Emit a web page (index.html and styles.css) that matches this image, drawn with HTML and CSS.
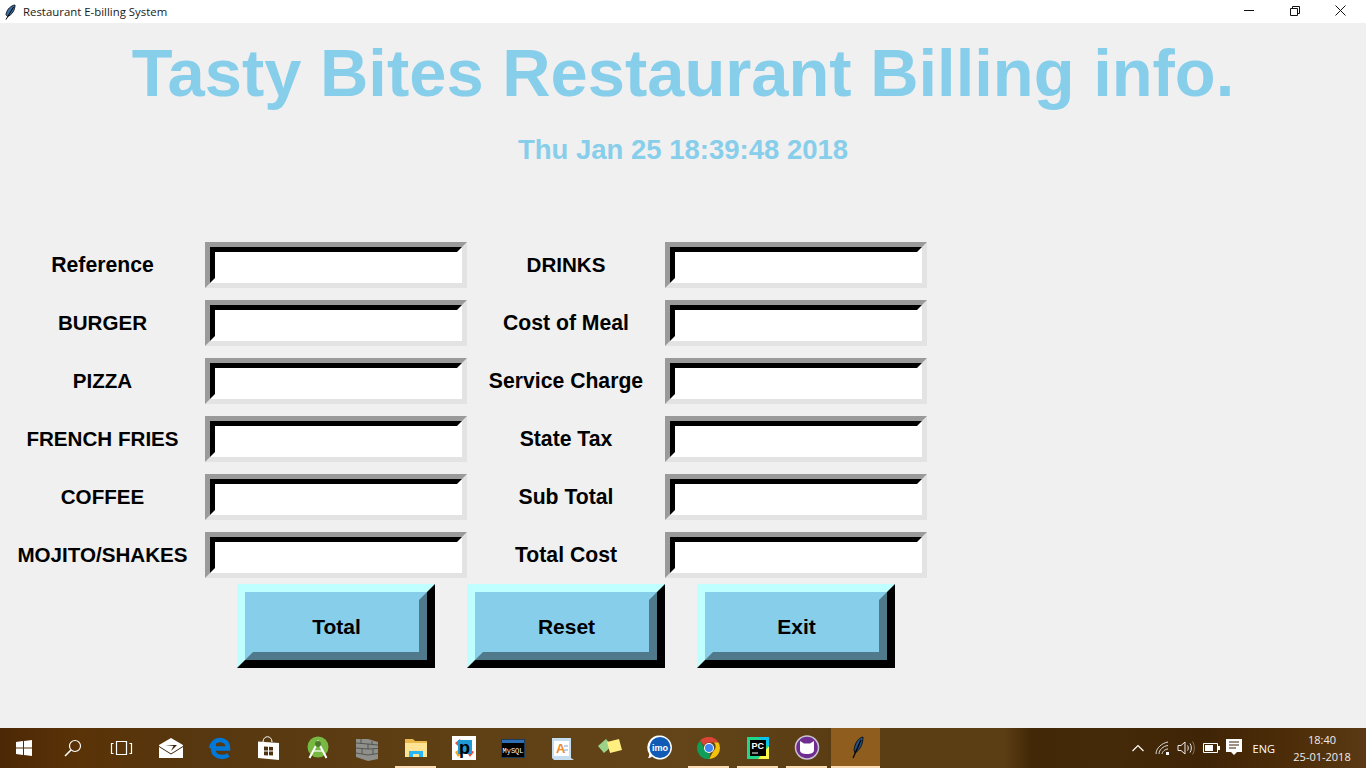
FILE: index.html
```html
<!DOCTYPE html>
<html lang="en">

<head>
    <meta charset="UTF-8">
    <title>Restaurant E-billing System</title>
    <link rel="stylesheet" href="styles.css">
</head>

<body>

    <header class="titlebar">
        <svg class="tk-icon" width="16" height="16" viewBox="0 0 16 16">
            <path d="M13 1C9 1.500 5 5 4 10.500l1.500 2C10 11 13 6 13 1z" fill="#3b6ea5" stroke="#101820" stroke-width="1" />
            <path d="M11.500 3L4 15.500" stroke="#000" stroke-width="1" />
        </svg>
        <span class="window-name">Restaurant E-billing System</span>
        <div class="window-controls">
            <svg width="46" height="23" viewBox="0 0 46 23"><path d="M18 10.500H28" stroke="#111" /></svg>
            <svg width="46" height="23" viewBox="0 0 46 23" fill="none" stroke="#111"><path d="M18.500 8.500h7v7h-7z" /><path d="M20.500 8V6.500h7v7H26" /></svg>
            <svg width="46" height="23" viewBox="0 0 46 23" stroke="#111"><path d="M17.500 5.500l10 10M27.500 5.500l-10 10" /></svg>
        </div>
    </header>

    <main class="app">
        <h1 class="heading">Tasty Bites Restaurant Billing info.</h1>
        <p class="clock-line">Thu Jan 25 18:39:48 2018</p>

        <form class="bill-form">
            <label class="mixed">Reference</label>
            <div class="field"><div class="field-inner"></div></div>
            <label>DRINKS</label>
            <div class="field"><div class="field-inner"></div></div>

            <label>BURGER</label>
            <div class="field"><div class="field-inner"></div></div>
            <label class="mixed">Cost of Meal</label>
            <div class="field"><div class="field-inner"></div></div>

            <label>PIZZA</label>
            <div class="field"><div class="field-inner"></div></div>
            <label class="mixed">Service Charge</label>
            <div class="field"><div class="field-inner"></div></div>

            <label>FRENCH FRIES</label>
            <div class="field"><div class="field-inner"></div></div>
            <label class="mixed">State Tax</label>
            <div class="field"><div class="field-inner"></div></div>

            <label>COFFEE</label>
            <div class="field"><div class="field-inner"></div></div>
            <label class="mixed">Sub Total</label>
            <div class="field"><div class="field-inner"></div></div>

            <label>MOJITO/SHAKES</label>
            <div class="field"><div class="field-inner"></div></div>
            <label class="mixed">Total Cost</label>
            <div class="field"><div class="field-inner"></div></div>
        </form>

        <div class="actions">
            <div class="btn"><div class="btn-face">Total</div></div>
            <div class="btn"><div class="btn-face">Reset</div></div>
            <div class="btn"><div class="btn-face">Exit</div></div>
        </div>
    </main>

    <footer class="taskbar">
        <div class="task-icons">
            <!-- start -->
            <div class="task"><svg viewBox="0 0 32 32"><path fill="#fff" d="M8 10l7-1v6.500H8zM16 8.900L24 8v7.500h-8zM8 16.500h7V23l-7-1zM16 16.500h8V24l-8-1.100z" /></svg></div>
            <!-- search -->
            <div class="task"><svg viewBox="0 0 32 32" fill="none" stroke="#fff" stroke-width="1.200"><circle cx="18" cy="14" r="5.500" /><path d="M14 18l-6 6" stroke-width="1.600" /></svg></div>
            <!-- task view -->
            <div class="task"><svg viewBox="0 0 32 32" fill="none" stroke="#fff" stroke-width="1.200"><path d="M10.500 9.500h10v13h-10zM7.500 11.500H5.500v10h2M23.500 11.500h2v10h-2" /></svg></div>
            <!-- mail -->
            <div class="task"><svg viewBox="0 0 32 32"><path fill="#fff" d="M4 13L16 6l12 7v13H4z" /><path fill="#3d2208" d="M10 13h12l-6 6 2.500-5z" /><path fill="#3d2208" d="M4 14l12 7.500L28 14v.9l-12 7.500-12-7.500z" /></svg></div>
            <!-- edge -->
            <div class="task"><svg viewBox="0 0 32 32" fill="none" stroke="#0078d7" stroke-width="4.500"><path d="M9 16.500h15C24 11 20.500 8 16 8c-5 0-8.500 4-9 8 1-2 3-4 5-4" /><path d="M9 16c0 6 4 9 8.500 9 2.500 0 5-.6 7-2" /></svg></div>
            <!-- store -->
            <div class="task"><svg viewBox="0 0 32 32"><path fill="none" stroke="#fff" d="M10 10c0-7 9-7 9 0" /><path fill="#fff" d="M5 9.500L26 11v17L5 26z" /><path fill="#4f3110" d="M11 14.500l4 .2v3.800h-4zM16 14.800l4 .2v3.500h-4zM11 19.500h4v4l-4-.2zM16 19.500h4v4l-4-.2z" /></svg></div>
            <!-- android studio -->
            <div class="task"><svg viewBox="0 0 32 32"><circle cx="16" cy="15" r="10.500" fill="#78b943" /><path fill="none" stroke="#fff" stroke-width="2" d="M7.500 26L16 10l8.500 16" /><path fill="none" stroke="#fff" stroke-width="1.200" d="M11 19h10" /><circle cx="16" cy="12" r="3" fill="#4e7a2c" /></svg></div>
            <!-- wall -->
            <div class="task"><svg viewBox="0 0 32 32"><path fill="#8f8f8c" d="M5 7h12l10 3v17l-10 2-12-4z" /><path fill="none" stroke="#55564f" d="M5 11l12 1 10 1M5 16l12 1 10-.5M5 21l12 2 10-1.500M10 7v5M17 12v5M11 16v6M21 9v4M22 17v5" /></svg></div>
            <!-- explorer -->
            <div class="task" data-open="yes"><svg viewBox="0 0 32 32"><path fill="#e8b84a" d="M5 7h8l2 2h12v4H5z" /><path fill="#ffe394" d="M5 11h22v14H5z" /><path fill="#29b6f6" d="M9 25v-6h14v6h-4v-3h-6v3z" /></svg></div>
            <!-- picsart -->
            <div class="task"><svg viewBox="0 0 32 32"><path fill="#fff" d="M4 4h24v24H4z" /><path fill="#e8513a" d="M7 11l5-4 2 4-4 3zM22 25l4-5-3-2-3 4z" /><path fill="#f5a623" d="M7 20l3 5 3-3-3-4z" /><path fill="#1f9ad6" d="M10 8h14v14H10z" /><text x="16.500" y="22" class="icon-letter">p</text></svg></div>
            <!-- mysql console -->
            <div class="task"><svg viewBox="0 0 32 32"><path fill="#1b3a5c" d="M4 7h24v19H4z" /><path fill="#2f6fb5" d="M5 8h22v3H5z" /><path fill="#000" d="M5 11h22v14H5z" /><text x="5.500" y="20.500" class="icon-tiny">MySQL</text></svg></div>
            <!-- office doc -->
            <div class="task"><svg viewBox="0 0 32 32"><path fill="#c6dcef" d="M6 6h19v20l3 2H8l-2-2z" /><path fill="#fff" d="M8 9h15v15H8z" /><text x="10" y="21" class="icon-doc">A</text><path stroke="#7da7cf" d="M18 14h4M18 18h4" /></svg></div>
            <!-- sticky notes -->
            <div class="task"><svg viewBox="0 0 32 32"><path fill="#9bd28a" d="M3 14l8-7 6 7-8 7z" /><path fill="#ffee80" d="M12 10l12-3 3 11-12 3z" /></svg></div>
            <!-- imo -->
            <div class="task"><svg viewBox="0 0 32 32"><path fill="#fff" d="M16 3.500a12 12 0 1 1-8 21c-1 1-3 1.500-4 1.500 1-1.500 1.500-3 1-4.500A12 12 0 0 1 16 3.500z" /><circle cx="16" cy="15.500" r="10.500" fill="#0f5bb5" /><text x="16" y="18.500" class="icon-imo">imo</text></svg></div>
            <!-- chrome -->
            <div class="task" data-open="yes"><svg viewBox="0 0 32 32"><path fill="#db4437" d="M16 5a11 11 0 0 1 9.500 5.500H16a5.500 5.500 0 0 0-5 3.300L7 8.700A11 11 0 0 1 16 5z" /><path fill="#f4c20d" d="M25.500 10.500A11 11 0 0 1 16 27l4.500-8a5.500 5.500 0 0 0 .3-8.500z" /><path fill="#0f9d58" d="M7 8.700l4.500 7.800a5.500 5.500 0 0 0 6 4.800L16 27A11 11 0 0 1 7 8.700z" /><circle cx="16" cy="16" r="5" fill="#fff" /><circle cx="16" cy="16" r="4" fill="#4285f4" /></svg></div>
            <!-- pycharm -->
            <div class="task" data-open="yes"><svg viewBox="0 0 32 32"><path fill="#21d789" d="M5 5h22v22H5z" /><path fill="#fcf84a" d="M16 27h11V14z" /><path fill="#07c3f2" d="M16 5h11v10z" /><path fill="#000" d="M8 8h16v16H8z" /><text x="9.500" y="17" class="icon-pc">PC</text><path stroke="#fff" d="M10 21h6" /></svg></div>
            <!-- github-ish cat -->
            <div class="task" data-open="yes"><svg viewBox="0 0 32 32"><circle cx="16" cy="15.500" r="11.500" fill="#6f2c91" stroke="#c9c4cf" stroke-width="1.500" /><path fill="#fff" d="M9 9l4 2.500h6L23 9v9c0 3-3 4-7 4s-7-1-7-4z" /></svg></div>
            <!-- tk feather -->
            <div class="task task-active" data-open="yes"><svg viewBox="0 0 32 32"><path d="M23 5c-5 1-8 6-9 13l1 3c5-3 8-9 8-16z" fill="#27507f" stroke="#0b1420" /><path d="M21 8L13 26" stroke="#000" stroke-width="1.200" /></svg></div>
        </div>

        <div class="tray">
            <svg class="tray-chevron" width="14" height="10" viewBox="0 0 14 10" fill="none" stroke="#fff" stroke-width="1.200"><path d="M1.500 8L7 2.500 12.500 8" /></svg>
            <svg class="tray-wifi" width="16" height="16" viewBox="0 0 16 16" fill="none" stroke="#ddd" stroke-width="1"><path d="M1 14C1 8 7 3 13 2M4 14c0-4 4-8 9-8.500M7 14c0-2 3-5 6-5" /><path d="M11 12h3v3h-3z" fill="#fff" stroke="none" /></svg>
            <svg class="tray-sound" width="18" height="16" viewBox="0 0 18 16" fill="none" stroke="#eee"><path d="M1 5.500h3L8 2v12l-4-3.500H1z" /><path d="M10.500 5.500c1 1.500 1 3.500 0 5M13 3.500c1.800 2.500 1.800 6.500 0 9" /><path d="M15.500 1.500c2.400 3.500 2.400 9.500 0 13" stroke="#8a7a66" /></svg>
            <svg class="tray-battery" width="17" height="10" viewBox="0 0 17 10"><path d="M.5.500h14v9H.5z" fill="none" stroke="#fff" /><path d="M2 2h8v6H2z" fill="#fff" /><path d="M15 3h2v4h-2z" fill="#fff" /></svg>
            <svg class="tray-action" width="17" height="18" viewBox="0 0 17 18"><path d="M0 0h16v13h-5l-3 3-3-3H0z" fill="#fff" /><path d="M3 3h10M3 6h10M3 9h7" stroke="#3d2208" /></svg>
            <span class="tray-lang">ENG</span>
            <div class="tray-clock"><span>18:40</span><span>25-01-2018</span></div>
        </div>
    </footer>

</body>

</html>
```

FILE: styles.css
```css
* {
    box-sizing: border-box;
}

body {
    margin: 0;
    width: 1366px;
    height: 768px;
    overflow: hidden;
    display: flex;
    flex-direction: column;
    background-color: #f0f0f0;
    font-family: "Liberation Sans", Arial, sans-serif;
}

.titlebar {
    height: 23px;
    flex: none;
    display: flex;
    align-items: center;
    background-color: #fff;
    padding-left: 2px;
}

.tk-icon {
    flex: none;
}

.window-name {
    margin-left: 5px;
    font-family: "Open Sans", sans-serif;
    font-size: 11.4px;
    color: #1a1a1a;
}

.window-controls {
    margin-left: auto;
    display: flex;
    padding-right: 2px;
}

.window-controls svg {
    display: block;
}

.app {
    flex: 1;
    min-height: 0;
}

.heading {
    margin: 10px 0 0;
    height: 80px;
    line-height: 80px;
    text-align: center;
    font-size: 66.9px;
    font-weight: bold;
    color: #87ceeb;
}

.clock-line {
    margin: 22px 0 0;
    height: 30px;
    line-height: 30px;
    text-align: center;
    font-size: 27.5px;
    font-weight: bold;
    color: #87ceeb;
}

.bill-form {
    margin-top: 77px;
    display: grid;
    grid-template-columns: 205px 262px 198px 262px;
    grid-auto-rows: 46px;
    row-gap: 12px;
}

.bill-form label {
    display: flex;
    align-items: center;
    justify-content: center;
    font-size: 20.6px;
    font-weight: bold;
    color: #000;
    white-space: nowrap;
}

.bill-form label.mixed {
    font-size: 21.2px;
}

.field {
    border-style: solid;
    border-width: 5px;
    border-color: #9a9a9a #e3e3e3 #e3e3e3 #9a9a9a;
}

.field-inner {
    height: 100%;
    background-color: #fff;
    border-style: solid;
    border-width: 5px;
    border-color: #000 #fff #fff #000;
}

.actions {
    margin-top: 6px;
    padding-left: 237px;
    display: flex;
    gap: 32px;
}

.btn {
    width: 198px;
    height: 84px;
    border-style: solid;
    border-width: 8px;
    border-color: #c0ffff #000 #000 #c0ffff;
}

.btn-face {
    height: 100%;
    display: flex;
    align-items: center;
    justify-content: center;
    padding: 1px 0 0 1px;
    background-color: #87ceeb;
    border-style: solid;
    border-width: 8px;
    border-color: #87ceeb #507a8b #507a8b #87ceeb;
    font-size: 21px;
    font-weight: bold;
    color: #000;
}

.taskbar {
    height: 40px;
    flex: none;
    display: flex;
    justify-content: space-between;
    background: linear-gradient(90deg, #4d2806 0, #5a3307 6%, #57370f 14%, #5e3f14 30%, #634519 50%, #5a3c14 62%, #5c3e14 66%, #5c3e14 73.5%, #422806 75.5%, #442a08 82%, #3f2406 88%, #4c2c08 94%, #5a3a14 100%);
}

.task-icons {
    display: flex;
}

.task {
    position: relative;
    width: 48.9px;
    height: 40px;
    display: flex;
    align-items: center;
    justify-content: center;
}

.task svg {
    width: 32px;
    height: 32px;
}

.task[data-open="yes"]::after {
    content: "";
    position: absolute;
    left: 4px;
    right: 4px;
    bottom: 0;
    height: 2px;
    background-color: #fbdcb4;
}

.task-active {
    background-color: #8f5e1e;
}

.task-active[data-open="yes"]::after {
    left: 0;
    right: 0;
}

.icon-letter {
    font: bold 18px "Liberation Sans", sans-serif;
    fill: #000;
    text-anchor: middle;
}

.icon-tiny {
    font: 7px "Liberation Mono", monospace;
    fill: #fff;
}

.icon-doc {
    font: bold 13px "Liberation Sans", sans-serif;
    fill: #f08a24;
}

.icon-imo {
    font: bold 9px "Liberation Sans", sans-serif;
    fill: #fff;
    text-anchor: middle;
}

.icon-pc {
    font: bold 9px "Liberation Sans", sans-serif;
    fill: #fff;
}

.tray {
    display: flex;
    align-items: center;
    color: #fff;
    padding-right: 14px;
}

.tray-chevron {
    margin-right: 10px;
}

.tray-wifi {
    margin-right: 6px;
}

.tray-sound {
    margin-right: 8px;
}

.tray-battery {
    margin-right: 6px;
}

.tray-action {
    margin-right: 10px;
}

.tray-lang {
    font-family: "Open Sans", sans-serif;
    font-size: 11px;
    margin-right: 17px;
}

.tray-clock {
    width: 60px;
    display: flex;
    flex-direction: column;
    align-items: center;
    font-family: "Open Sans", sans-serif;
    font-size: 11px;
    line-height: 17px;
    color: #eee;
}
```
